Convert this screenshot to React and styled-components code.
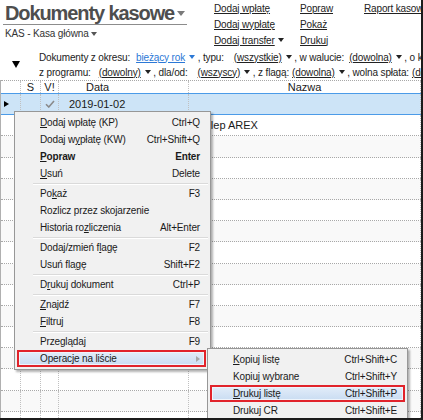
import React from 'react';
import styled, { createGlobalStyle } from 'styled-components';

const GlobalStyle = createGlobalStyle`
  html, body {
    margin: 0;
    padding: 0;
    background: #fff;
  }
  body {
    font-family: "Liberation Sans", Arial, sans-serif;
  }
`;

const Frame = styled.div`
  position: relative;
  width: 423px;
  height: 420px;
  box-sizing: border-box;
  border-right: 2px solid #1b1b1b;
  border-bottom: 2px solid #1b1b1b;
  overflow: hidden;
  background: #fff;
  font-size: 10px;
  letter-spacing: -0.15px;
  color: #1e1e1e;
`;

const TopBar = styled.header`
  display: flex;
  height: 49px;
`;

const TitleBlock = styled.div`
  width: 214px;
  flex: none;
`;

const Title = styled.h1`
  display: inline-flex;
  align-items: center;
  margin: 2px 0 0 3px;
  padding: 0 2px;
  border-bottom: 1px solid #8c8c8c;
  font-size: 20px;
  line-height: 22px;
  font-weight: bold;
  letter-spacing: -1.1px;
  color: #4e4e4e;
`;

const Subtitle = styled.div`
  display: flex;
  align-items: center;
  margin: 2px 0 0 5px;
  line-height: 14px;
  color: #333;
`;

const Caret = styled.span`
  display: inline-block;
  flex: none;
  width: 0;
  height: 0;
  margin-left: ${(p) => p.$gap || 2}px;
  border-left: ${(p) => (p.$size || 7) / 2}px solid transparent;
  border-right: ${(p) => (p.$size || 7) / 2}px solid transparent;
  border-top: ${(p) => Math.round((p.$size || 7) * 0.6)}px solid ${(p) => p.$color || '#222'};
`;

const LinkGrid = styled.nav`
  display: grid;
  grid-template-columns: 86px 64px auto;
  grid-auto-rows: 16px;
  align-items: center;
  white-space: nowrap;
`;

const TopLink = styled.a`
  display: inline-flex;
  align-items: center;
  color: #222;
  text-decoration: underline;
  text-underline-offset: 1px;
`;

const Filters = styled.section`
  display: flex;
  height: 31px;
`;

const SortArrow = styled.div`
  flex: none;
  width: 39px;
  display: flex;
  align-items: center;
  padding: 0 0 0 12px;
  box-sizing: border-box;

  &::before {
    content: '';
    border-left: 4.5px solid transparent;
    border-right: 4.5px solid transparent;
    border-top: 7px solid #000;
  }
`;

const FilterLines = styled.div`
  display: flex;
  flex-direction: column;
  padding-top: 0.5px;
  min-width: 0;
`;

const FilterLine = styled.div`
  display: flex;
  align-items: center;
  height: 15px;
  white-space: nowrap;
`;

const Label = styled.span`
  color: #222;
`;

const Value = styled.span`
  display: inline-flex;
  align-items: center;
  margin: 0 2px 0 ${(p) => p.$gap || 8}px;
  color: ${(p) => p.$color || '#222'};
  text-decoration: underline;
  text-underline-offset: 1px;
`;

const Table = styled.div`
  border-left: 1px solid #b0b0b0;
  font-size: 11px;
  letter-spacing: 0;
  color: #1a1a1a;
`;

const Row = styled.div`
  display: grid;
  grid-template-columns: 20px 20px 18px 130px 1fr;
  height: ${(p) => (p.$head ? 14 : 21.2)}px;
  box-sizing: border-box;
  background: ${(p) => (p.$selected ? '#cde4f7' : p.$alt ? '#f9f9f9' : '#fff')};
  border-top: ${(p) => (p.$head ? '1px dotted #a8a8a8' : 'none')};
  border-bottom: ${(p) =>
    p.$selected || p.$head ? '1px solid #4b9be8' : '1px dotted #a8a8a8'};
`;

const Cell = styled.div`
  display: flex;
  align-items: center;
  justify-content: ${(p) => (p.$center ? 'center' : 'flex-start')};
  padding-left: ${(p) => p.$pad || 0}px;
  border-right: 1px dotted #c0c0c0;
  overflow: hidden;
  white-space: nowrap;
  line-height: 12px;
`;

const RowMarker = styled.span`
  margin-left: 3px;
  border-top: 3.5px solid transparent;
  border-bottom: 3.5px solid transparent;
  border-left: 5px solid #000;
`;

const Menu = styled.div`
  position: absolute;
  left: ${(p) => p.$left}px;
  top: ${(p) => p.$top}px;
  width: ${(p) => p.$width}px;
  box-sizing: border-box;
  padding: 2px 0;
  border: 1px solid #979797;
  background: #f1f1f1;
  box-shadow: 2px 2px 2px rgba(0, 0, 0, 0.3);
  color: #1a1a1a;
`;

const Item = styled.div`
  display: flex;
  align-items: center;
  justify-content: space-between;
  height: 17px;
  margin: 0 ${(p) => p.$inset}px 0 2px;
  padding: 0 ${(p) => p.$keyPad}px 0 23px;
  font-weight: ${(p) => (p.$bold ? 'bold' : 'normal')};
  white-space: nowrap;
  ${(p) =>
    p.$hot &&
    `
    background: linear-gradient(#e6effa, #c6daf1);
    box-shadow: inset 0 0 0 2px #e1232b, inset 0 0 0 3px #eef4fb;
  `}

  u {
    text-underline-offset: 1px;
  }
`;

const Separator = styled.div`
  height: 1px;
  margin: 1px 2px 0 18px;
  background: #dadada;
  border-bottom: 1px solid #fff;
`;

const SubArrow = styled.span`
  border-top: 3.5px solid transparent;
  border-bottom: 3.5px solid transparent;
  border-left: 4px solid #a8a8a8;
`;

const mainItems = [
  { text: 'Dodaj wpłatę (KP)', m: 0, key: 'Ctrl+Q' },
  { text: 'Dodaj wypłatę (KW)', m: 7, key: 'Ctrl+Shift+Q' },
  { text: 'Popraw', m: 0, key: 'Enter', bold: true },
  { text: 'Usuń', m: 0, key: 'Delete' },
  'sep',
  { text: 'Pokaż', m: 2, key: 'F3' },
  { text: 'Rozlicz przez skojarzenie' },
  { text: 'Historia rozliczenia', m: 11, key: 'Alt+Enter' },
  'sep',
  { text: 'Dodaj/zmień flagę', m: 13, key: 'F2' },
  { text: 'Usuń flagę', m: 8, key: 'Shift+F2' },
  'sep',
  { text: 'Drukuj dokument', m: 1, key: 'Ctrl+P' },
  'sep',
  { text: 'Znajdź', m: 0, key: 'F7' },
  { text: 'Filtruj', m: 0, key: 'F8' },
  'sep',
  { text: 'Przeglądaj', key: 'F9' },
  { text: 'Operacje na liście', sub: true, hot: true },
];

const subItems = [
  { text: 'Kopiuj listę', m: 0, key: 'Ctrl+Shift+C' },
  { text: 'Kopiuj wybrane', key: 'Ctrl+Shift+Y' },
  { text: 'Drukuj listę', m: 0, key: 'Ctrl+Shift+P', hot: true },
  { text: 'Drukuj CR', key: 'Ctrl+Shift+E' },
];

function Mnemonic({ text, m }) {
  if (m === undefined) return <span>{text}</span>;
  return (
    <span>
      {text.slice(0, m)}
      <u>{text[m]}</u>
      {text.slice(m + 1)}
    </span>
  );
}

function MenuList({ items, inset, keyPad }) {
  return items.map((it, i) =>
    it === 'sep' ? (
      <Separator key={i} />
    ) : (
      <Item key={i} $bold={it.bold} $hot={it.hot} $inset={inset} $keyPad={keyPad}>
        <Mnemonic text={it.text} m={it.m} />
        {it.sub ? <SubArrow /> : <span>{it.key}</span>}
      </Item>
    )
  );
}

function CheckMark() {
  return (
    <svg width="10" height="8" viewBox="0 0 10 8">
      <polyline points="1,4.2 3.8,7 9,1" fill="none" stroke="#8a8a8a" strokeWidth="1.6" />
    </svg>
  );
}

export default function App() {
  const emptyRows = Array.from({ length: 14 });
  return (
    <>
      <GlobalStyle />
      <Frame>
        <TopBar>
          <TitleBlock>
            <Title>
              Dokumenty kasowe
              <Caret $color="#7a7a7a" $size={8} $gap={3} />
            </Title>
            <Subtitle>
              KAS - Kasa główna
              <Caret $color="#555" $size={7} />
            </Subtitle>
          </TitleBlock>
          <LinkGrid>
            <span><TopLink>Dodaj wpłatę</TopLink></span>
            <span><TopLink>Popraw</TopLink></span>
            <span><TopLink>Raport kasowy</TopLink></span>
            <span><TopLink>Dodaj wypłatę</TopLink></span>
            <span><TopLink>Pokaż</TopLink></span>
            <span />
            <span>
              <TopLink>
                Dodaj transfer
                <Caret $gap={3} />
              </TopLink>
            </span>
            <span><TopLink>Drukuj</TopLink></span>
          </LinkGrid>
        </TopBar>

        <Filters>
          <SortArrow />
          <FilterLines>
            <FilterLine>
              <Label>Dokumenty z okresu:</Label>
              <Value $color="#2b78d6" $gap={6}>bieżący rok</Value>
              <Caret $color="#2b78d6" />
              <Label>&nbsp;, typu:</Label>
              <Value $gap={10}>(wszystkie)</Value>
              <Caret />
              <Label>&nbsp;, w walucie:</Label>
              <Value $gap={5}>(dowolna)</Value>
              <Caret />
              <Label>&nbsp;, o kasie:</Label>
            </FilterLine>
            <FilterLine>
              <Label>z programu:</Label>
              <Value>(dowolny)</Value>
              <Caret />
              <Label>&nbsp;, dla/od:</Label>
              <Value $gap={10}>(wszyscy)</Value>
              <Caret />
              <Label>&nbsp;, z flagą:</Label>
              <Value $gap={3}>(dowolna)</Value>
              <Caret />
              <Label>&nbsp;, wolna spłata:</Label>
              <Value $gap={3}>(dowolna)</Value>
            </FilterLine>
          </FilterLines>
        </Filters>

        <Table>
          <Row $head>
            <Cell />
            <Cell $center>S</Cell>
            <Cell $center>V!</Cell>
            <Cell $pad={27}>Data</Cell>
            <Cell $center>Nazwa</Cell>
          </Row>
          <Row $selected>
            <Cell><RowMarker /></Cell>
            <Cell />
            <Cell $center><CheckMark /></Cell>
            <Cell $pad={10}>2019-01-02</Cell>
            <Cell />
          </Row>
          <Row>
            <Cell />
            <Cell />
            <Cell />
            <Cell />
            <Cell $pad={9}>Sklep AREX</Cell>
          </Row>
          {emptyRows.map((_, i) => (
            <Row key={i} $alt={i % 2 === 0}>
              <Cell />
              <Cell />
              <Cell />
              <Cell />
              <Cell />
            </Row>
          ))}
        </Table>

        <Menu $left={14} $top={111} $width={197}>
          <MenuList items={mainItems} inset={4} keyPad={6} />
        </Menu>
        <Menu $left={207} $top={348} $width={201}>
          <MenuList items={subItems} inset={2} keyPad={8} />
        </Menu>
      </Frame>
    </>
  );
}
